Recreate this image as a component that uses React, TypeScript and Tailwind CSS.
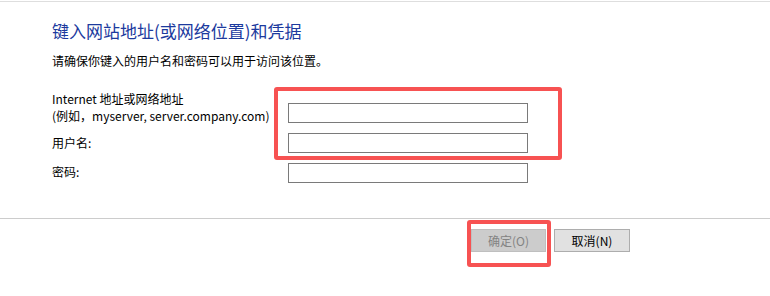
import React from 'react';

const font = { fontFamily: '"Noto Sans CJK SC", "Noto Sans", sans-serif' };

export default function App() {
  return (
    <div className="relative w-[770px] h-[296px] bg-white text-[12px] text-black" style={font}>
      <div className="h-px mt-px bg-[#dedede]" />

      <div className="pl-[52px]">
        {/* heading */}
        <h1 className="pt-[17px] text-[17px] leading-[24px] text-[#1c3a9e] font-normal">
          键入网站地址(或网络位置)和凭据
        </h1>
        <p className="mt-[9px] leading-[18px]">请确保你键入的用户名和密码可以用于访问该位置。</p>

        {/* form */}
        <div className="mt-[20px]">
          <div className="flex items-start">
            <label className="w-[236px] leading-[17px] whitespace-nowrap">
              Internet 地址或网络地址
              <br />
              (例如，myserver, server.company.com)
            </label>
            <input className="mt-[13px] w-[240px] h-[20px] border border-[#7a7a7a] outline-none" />
          </div>
          <div className="flex items-start mt-[9px]">
            <label className="w-[236px] leading-[17px] mt-px">用户名:</label>
            <input className="w-[240px] h-[20px] border border-[#7a7a7a] outline-none" />
          </div>
          <div className="flex items-start mt-[10px]">
            <label className="w-[236px] leading-[17px]">密码:</label>
            <input type="password" className="w-[240px] h-[20px] border border-[#7a7a7a] outline-none" />
          </div>
        </div>
      </div>

      <div className="mt-[35px] h-px bg-[#cccccc]" />

      <div className="flex justify-end gap-[8px] pr-[140px] mt-[10px]">
        <button disabled className="w-[75px] h-[23px] bg-[#cccccc] border border-[#bfbfbf] text-[#838383] text-[12px]">
          确定(O)
        </button>
        <button className="w-[76px] h-[23px] bg-[#e1e1e1] border border-[#adadad] text-black text-[12px]">
          取消(N)
        </button>
      </div>

      {/* red annotation boxes */}
      <div className="absolute left-[274px] top-[86px] w-[288px] h-[73px] border-4 border-[#f75252] rounded-[3px] pointer-events-none" />
      <div className="absolute left-[467px] top-[219px] w-[84px] h-[47px] border-4 border-[#f75252] rounded-[3px] pointer-events-none" />
    </div>
  );
}
